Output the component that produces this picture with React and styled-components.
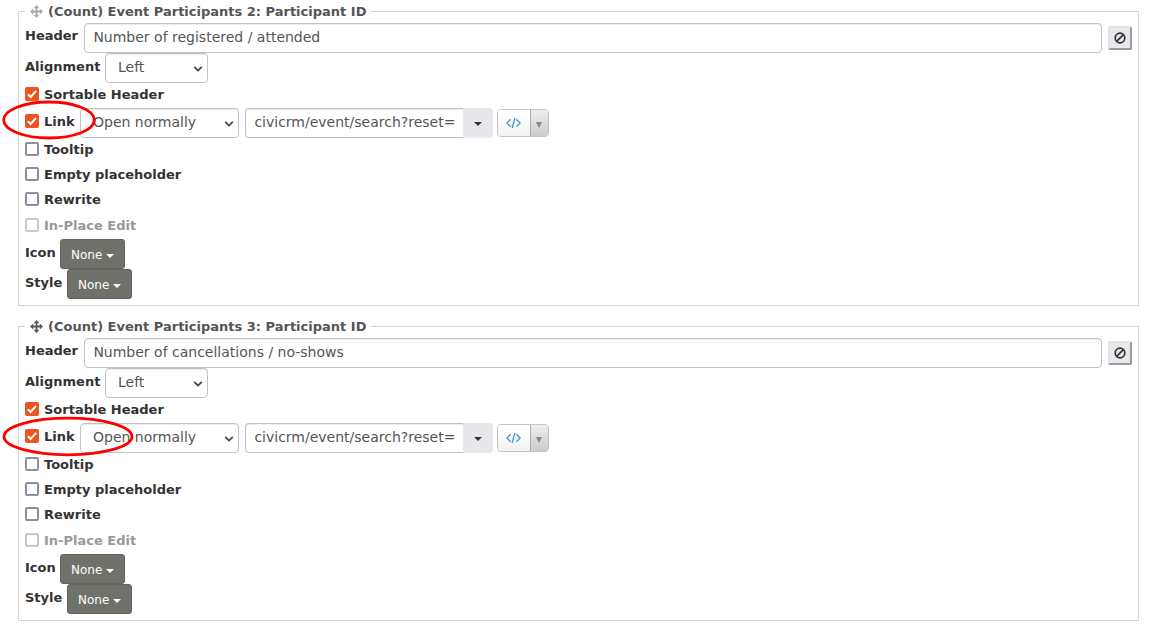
import React from "react";
import styled, { createGlobalStyle } from "styled-components";

const GlobalStyle = createGlobalStyle`
  * { box-sizing: border-box; }
  body {
    margin: 0;
    background: #fff;
    color: #333;
    font-family: "DejaVu Sans", sans-serif;
    font-size: 13px;
    overflow: hidden;
  }
`;

const Page = styled.main`
  position: relative;
  height: 632px;
  padding: 1px 27px 0 18px;
  display: flex;
  flex-direction: column;
  gap: 10px;
`;

const Fieldset = styled.fieldset`
  margin: 0;
  min-width: 0;
  height: 305px;
  padding: 1px 6px 6px;
  border: 1px solid #d3d3d3;
`;

const Legend = styled.legend`
  display: flex;
  align-items: center;
  gap: 5px;
  height: 21px;
  padding: 0 5px;
  font-weight: bold;
  line-height: 21px;
  white-space: pre;
  color: #555;
  svg { color: ${(p) => (p.$faded ? "#aaa" : "#555")}; }
`;

const Row = styled.div`
  display: flex;
  align-items: flex-start;
  height: ${(p) => p.$height || 30}px;
`;

const Label = styled.label`
  flex: none;
  width: ${(p) => p.$width}px;
  padding-top: ${(p) => p.$top || 5}px;
  font-weight: bold;
  line-height: 15px;
  white-space: nowrap;
`;

const CheckLabel = styled.label`
  flex: none;
  display: flex;
  align-items: flex-start;
  gap: 5px;
  height: 18px;
  width: ${(p) => (p.$width ? `${p.$width}px` : "auto")};
  margin-top: ${(p) => p.$top}px;
  font-weight: bold;
  line-height: 18px;
  white-space: nowrap;
  color: ${(p) => (p.$disabled ? "#999" : "#333")};
`;

const Box = styled.span`
  flex: none;
  display: flex;
  width: 14px;
  height: 14px;
  margin-top: 1px;
  border-radius: 2px;
  border: ${(p) => (p.$checked ? "0" : `2px solid ${p.$disabled ? "#c7c7cd" : "#8f8f9d"}`)};
  background: ${(p) => (p.$checked ? "#e95420" : "#fff")};
`;

const Field = styled.div`
  height: 30px;
  padding: 0 8px;
  border: 1px solid #c2c2c2;
  border-radius: 4px;
  background: #fff;
  box-shadow: inset 0 1px 1px rgba(0, 0, 0, 0.075);
  color: #555;
  font-size: 14px;
  line-height: 27px;
  white-space: nowrap;
`;

const HeaderField = styled(Field)`
  flex: 1;
  padding-left: 8.4px;
`;

const Select = styled(Field)`
  display: flex;
  justify-content: space-between;
  width: ${(p) => p.$width}px;
  padding: 0 4px 0 12px;
  svg { margin-top: 11px; }
`;

const UrlField = styled(Field)`
  width: 218px;
  margin-left: 6px;
  padding-left: 8.4px;
  border-right: 0;
  border-radius: 4px 0 0 4px;
`;

const UrlToggle = styled.button`
  display: flex;
  justify-content: center;
  align-items: center;
  width: 30px;
  height: 30px;
  padding: 2px 0 0;
  border: 0;
  border-radius: 0 4px 4px 0;
  background: #e8e7ec;
`;

const Caret = styled.span`
  width: 0;
  height: 0;
  border: 4px solid transparent;
  border-top-color: ${(p) => p.$color || "#333"};
  border-bottom: 0;
`;

const TokenButton = styled.div`
  display: flex;
  width: 52px;
  height: 28px;
  margin: 1px 0 0 4px;
  border: 1px solid #c4c4c4;
  border-radius: 4px;
  overflow: hidden;
`;

const TokenIcon = styled.span`
  display: flex;
  align-items: center;
  justify-content: center;
  width: 32px;
  padding-right: 1px;
  background: linear-gradient(#fff 20%, #f1f1f1);
`;

const TokenArrow = styled.span`
  flex: 1;
  display: flex;
  align-items: center;
  justify-content: center;
  padding: 3px 2px 0 0;
  border-left: 1px solid #aaa;
  background: linear-gradient(#eee, #ccc);
`;

const ArrowMark = styled(Caret)`
  border-width: 6px 3.5px 0;
`;

const ClearButton = styled.button`
  display: flex;
  align-items: center;
  justify-content: center;
  width: 24px;
  height: 24px;
  margin: 3px 0 0 6px;
  padding: 0;
  border: 2px solid;
  border-color: #e3e3e7 #9b9b9e #9b9b9e #e3e3e7;
  border-radius: 2px;
  background: #e9e9ed;
  color: #333;
`;

const MenuButton = styled.button`
  display: flex;
  align-items: center;
  gap: 4px;
  width: 65px;
  height: 30px;
  padding: 2px 10px 0;
  border: 1px solid #62635c;
  border-radius: 3px;
  background: #70716b;
  color: #fff;
  font: 12px "DejaVu Sans", sans-serif;
  ${Caret} { margin-top: 1px; }
`;

const Markup = styled.svg`
  position: absolute;
  inset: 0;
  pointer-events: none;
`;

const MoveIcon = () => (
  <svg width="13" height="13" viewBox="0 0 13 13" fill="currentColor">
    <path d="M6.5 0 9.4 3.2H7.4V5.6H9.8V3.6L13 6.5 9.8 9.4V7.4H7.4V9.8H9.4L6.5 13 3.6 9.8H5.6V7.4H3.2V9.4L0 6.5 3.2 3.6V5.6H5.6V3.2H3.6Z" />
  </svg>
);

const BanIcon = () => (
  <svg width="12" height="12" viewBox="0 0 12 12" fill="none" stroke="currentColor" strokeWidth="1.7">
    <circle cx="6" cy="6" r="4.8" />
    <path d="M2.7 9.3 9.3 2.7" />
  </svg>
);

const CodeIcon = () => (
  <svg width="15" height="12" viewBox="0 0 15 12" fill="none" stroke="#3f97d0" strokeWidth="1.3">
    <path d="M4.6 2.2.9 6l3.7 3.8M10.4 2.2 14.1 6l-3.7 3.8M8.9 1 6.1 11" />
  </svg>
);

const Chevron = () => (
  <svg width="10" height="7" viewBox="0 0 10 7" fill="none" stroke="#444" strokeWidth="1.7">
    <path d="M1.2 1.8 5 5.6 8.8 1.8" />
  </svg>
);

function Check({ children, checked, disabled, top = 3, width }) {
  return (
    <CheckLabel $top={top} $width={width} $disabled={disabled}>
      <Box $checked={checked} $disabled={disabled}>
        {checked && (
          <svg width="14" height="14" viewBox="0 0 14 14" fill="none" stroke="#fff" strokeWidth="2">
            <path d="M2.8 7.3 5.6 10 11.2 3.8" />
          </svg>
        )}
      </Box>
      {children}
    </CheckLabel>
  );
}

function ColumnSettings({ title, header, faded }) {
  return (
    <Fieldset>
      <Legend $faded={faded}>
        <MoveIcon />
        {title}
      </Legend>
      <Row>
        <Label $width={59}>Header</Label>
        <HeaderField>{header}</HeaderField>
        <ClearButton aria-label="Clear"><BanIcon /></ClearButton>
      </Row>
      <Row>
        <Label $width={80} $top={6}>Alignment</Label>
        <Select $width={103}>Left<Chevron /></Select>
      </Row>
      <Row $height={25}><Check checked>Sortable Header</Check></Row>
      <Row>
        <Check checked top={5} width={55}>Link</Check>
        <Select $width={159}>Open normally<Chevron /></Select>
        <UrlField>civicrm/event/search?reset=</UrlField>
        <UrlToggle aria-label="Choose link"><Caret /></UrlToggle>
        <TokenButton>
          <TokenIcon><CodeIcon /></TokenIcon>
          <TokenArrow><ArrowMark $color="#888" /></TokenArrow>
        </TokenButton>
      </Row>
      <Row $height={25}><Check>Tooltip</Check></Row>
      <Row $height={25}><Check>Empty placeholder</Check></Row>
      <Row $height={25}><Check>Rewrite</Check></Row>
      <Row $height={26}><Check disabled top={4}>In-Place Edit</Check></Row>
      <Row>
        <Label $width={35} $top={6}>Icon</Label>
        <MenuButton>None<Caret $color="#fff" /></MenuButton>
      </Row>
      <Row>
        <Label $width={42} $top={6}>Style</Label>
        <MenuButton>None<Caret $color="#fff" /></MenuButton>
      </Row>
    </Fieldset>
  );
}

export default function App() {
  return (
    <>
      <GlobalStyle />
      <Page>
        <ColumnSettings faded title="(Count) Event Participants 2: Participant ID" header="Number of registered / attended" />
        <ColumnSettings title="(Count) Event Participants 3: Participant ID" header="Number of cancellations / no-shows" />
        <Markup width="1166" height="632" fill="none" stroke="#f00" strokeWidth="2.8">
          <ellipse cx="49" cy="120" rx="45.3" ry="18" />
          <ellipse cx="68" cy="436.5" rx="64" ry="18.3" />
        </Markup>
      </Page>
    </>
  );
}
